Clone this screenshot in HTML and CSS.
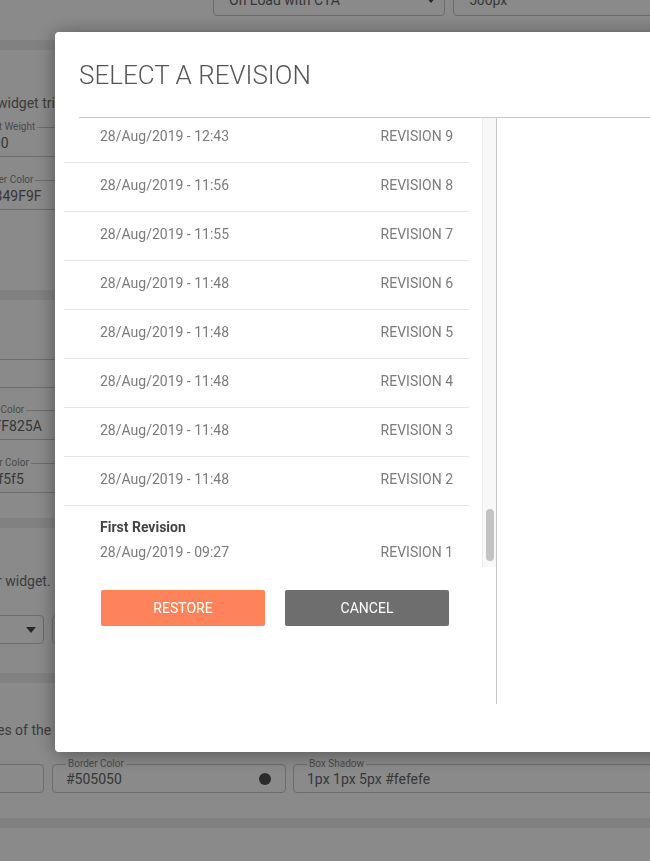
FILE: index.html
```html
<!DOCTYPE html>
<html lang="en">
<head>
<meta charset="utf-8">
<title>Select a revision</title>
<link rel="stylesheet" href="styles.css">
</head>
<body>
<div class="page">
  <div class="top-row">
    <div class="box top-select"><span>On Load with CTA</span><span class="caret"></span></div>
    <div class="box top-input"><span>500px</span></div>
  </div>
  <div class="band band-1"></div>

  <section class="sec sec-1">
    <p class="desc">widget triggers on the page.</p>
    <fieldset class="field f-weight"><legend>Font Weight</legend><span class="val">400</span></fieldset>
    <fieldset class="field f-hover"><legend>Hover Color</legend><span class="val">#349F9F</span></fieldset>
  </section>
  <div class="band"></div>

  <section class="sec sec-2">
    <div class="plain-input"></div>
    <fieldset class="field f-text"><legend>Text Color</legend><span class="val">#FF825A</span></fieldset>
    <fieldset class="field f-border"><legend>Border Color</legend><span class="val">#f5f5f5</span></fieldset>
  </section>
  <div class="band"></div>

  <section class="sec sec-3">
    <p class="desc">r widget.</p>
    <div class="field-row">
      <div class="box row-box sel-a"><span class="caret"></span></div>
      <div class="box row-box sel-b"></div>
    </div>
  </section>
  <div class="band"></div>

  <section class="sec sec-4">
    <p class="desc">es of the widget.</p>
    <div class="field-row">
      <fieldset class="field row-field"><legend>Border Width</legend><span class="val">1px</span></fieldset>
      <fieldset class="field row-field"><legend>Border Color</legend><span class="val">#505050</span><span class="swatch"></span></fieldset>
      <fieldset class="field row-field wide"><legend>Box Shadow</legend><span class="val">1px 1px 5px #fefefe</span></fieldset>
    </div>
  </section>
  <div class="band"></div>
</div>

<div class="overlay"></div>

<div class="modal">
  <h1 class="modal-title">SELECT A REVISION</h1>
  <div class="modal-rule"></div>
  <div class="modal-body">
    <div class="rev-col">
      <div class="rev-scroll">
        <div class="rev-viewport">
          <div class="rev-list">
            <div class="rev"><span>28/Aug/2019 - 12:43</span><span>REVISION 9</span></div>
            <div class="rev"><span>28/Aug/2019 - 11:56</span><span>REVISION 8</span></div>
            <div class="rev"><span>28/Aug/2019 - 11:55</span><span>REVISION 7</span></div>
            <div class="rev"><span>28/Aug/2019 - 11:48</span><span>REVISION 6</span></div>
            <div class="rev"><span>28/Aug/2019 - 11:48</span><span>REVISION 5</span></div>
            <div class="rev"><span>28/Aug/2019 - 11:48</span><span>REVISION 4</span></div>
            <div class="rev"><span>28/Aug/2019 - 11:48</span><span>REVISION 3</span></div>
            <div class="rev"><span>28/Aug/2019 - 11:48</span><span>REVISION 2</span></div>
            <div class="rev rev-first">
              <div class="rev-name">First Revision</div>
              <div class="rev-line"><span>28/Aug/2019 - 09:27</span><span>REVISION 1</span></div>
            </div>
          </div>
        </div>
        <div class="scroll-track"><div class="scroll-thumb"></div></div>
      </div>
      <div class="rev-actions">
        <button class="btn btn-restore">RESTORE</button>
        <button class="btn btn-cancel">CANCEL</button>
      </div>
    </div>
    <div class="preview-col"></div>
  </div>
</div>
</body>
</html>
```

FILE: styles.css
```css
* { box-sizing: border-box; }

html, body {
  margin: 0;
  height: 100%;
  overflow: hidden;
}

body {
  font-family: Roboto, "Liberation Sans", sans-serif;
  background: #ffffff;
  color: #666666;
}

/* ---------- background page ---------- */
.page {
  width: 650px;
}

.top-row {
  display: flex;
  gap: 8px;
  padding-left: 213px;
  height: 16px;
}

.box {
  border: 1px solid #c8c8c8;
  border-radius: 4px;
  display: flex;
  align-items: center;
  font-size: 14px;
  color: #666666;
  flex: none;
}

.top-select {
  width: 232px;
  height: 32px;
  margin-top: -16px;
  padding: 0 8px 0 15px;
  justify-content: space-between;
}

.top-input {
  width: 260px;
  height: 32px;
  margin-top: -16px;
  padding: 0 15px;
}

.caret {
  width: 0;
  height: 0;
  border-left: 5px solid transparent;
  border-right: 5px solid transparent;
  border-top: 6px solid #4a4a4a;
}

.band {
  height: 10px;
  background: #eeeeee;
}

.band-1 { margin-top: 24px; }

.sec { overflow: hidden; }

.sec-1 { height: 240px; padding-top: 43px; }
.sec-2 { height: 218px; padding-top: 59px; }
.sec-3 { height: 145px; padding-top: 43px; }
.sec-4 { height: 135px; padding-top: 37px; }

.desc {
  margin: 0 0 0 -3px;
  font-size: 14px;
  line-height: 20px;
  color: #707070;
  white-space: nowrap;
}

.field {
  margin: 0;
  padding: 0 14px 3px;
  border: 1px solid #c8c8c8;
  border-radius: 4px;
  min-width: 0;
  display: flex;
  align-items: center;
  justify-content: space-between;
}

.field legend {
  padding: 0 2px;
  font-size: 10px;
  line-height: 12px;
  color: #8a8a8a;
}

.field .val {
  font-size: 14px;
  line-height: 20px;
  color: #666666;
  white-space: nowrap;
}

.f-weight { width: 300px; margin-left: -35px; margin-top: 8px; }
.f-weight .val { margin-left: 5px; }

.f-hover { width: 300px; margin-left: -36px; margin-top: 17px; }
.f-hover .val { margin-left: 7px; }

.plain-input {
  width: 260px;
  height: 29px;
  margin-left: -200px;
  border: 1px solid #c8c8c8;
  border-radius: 4px;
}

.f-text { width: 300px; margin-left: -38px; margin-top: 16px; }
.f-text .val { margin-left: 8px; }

.f-border { width: 300px; margin-left: -44px; margin-top: 17px; }
.f-border .val { margin-left: 6px; }

.field-row {
  display: flex;
  gap: 8px;
  margin-left: -190px;
}

.sec-3 .field-row { margin-top: 24px; }
.sec-4 .field-row { margin-top: 18px; }

.row-box {
  width: 234px;
  height: 29px;
  justify-content: flex-end;
  padding-right: 7px;
}

.row-field {
  width: 234px;
  flex: none;
  padding: 0 15px 4px 13px;
}

.row-field .val { line-height: 18px; }

.row-field.wide { width: 420px; margin-left: -1px; }

.swatch {
  width: 12px;
  height: 12px;
  border-radius: 50%;
  background: #505050;
  margin-right: -1px;
}

/* ---------- overlay + modal ---------- */
.overlay {
  position: fixed;
  inset: 0;
  background: rgba(0, 0, 0, 0.46);
  z-index: 1;
}

.modal {
  position: fixed;
  left: 55px;
  top: 32px;
  width: 720px;
  height: 720px;
  background: #ffffff;
  border-radius: 4px;
  box-shadow: 0 2px 20px rgba(0, 0, 0, 0.4);
  z-index: 2;
}

.modal-title {
  margin: 0;
  padding: 27px 0 0 24px;
  font-size: 26px;
  line-height: 32px;
  font-weight: 300;
  color: #555555;
}

.modal-rule {
  margin: 26px 0 0 24px;
  height: 1px;
  background: #c8c8c8;
}

.modal-body {
  display: flex;
  margin-left: 9px;
}

.rev-col {
  width: 433px;
  height: 586px;
  border-right: 1px solid #c8c8c8;
  flex: none;
}

.rev-scroll {
  display: flex;
  gap: 13px;
  height: 449px;
}

.rev-viewport {
  width: 405px;
  overflow: hidden;
}

.rev-list {
  margin-top: -4px;
}

.rev {
  display: flex;
  justify-content: space-between;
  padding: 12px 16px 16px 36px;
  border-bottom: 1px solid #e4e4e4;
  font-size: 14px;
  line-height: 20px;
  color: #7b7b7b;
}

.rev-first {
  display: block;
  border-bottom: 0;
  padding-top: 11px;
  padding-bottom: 20px;
}

.rev-name {
  font-weight: 700;
  color: #444444;
}

.rev-line {
  display: flex;
  justify-content: space-between;
  margin-top: 5px;
}

.scroll-track {
  width: 14px;
  flex: none;
  background: #f8f8f8;
  border-left: 1px solid #ebebeb;
  padding: 391px 0 0 3px;
}

.scroll-thumb {
  width: 8px;
  height: 52px;
  border-radius: 4px;
  background: #c3c3c3;
}

.rev-actions {
  display: flex;
  gap: 20px;
  padding: 23px 0 0 37px;
}

.btn {
  width: 164px;
  height: 36px;
  border: 0;
  border-radius: 2px;
  font-family: Roboto, "Liberation Sans", sans-serif;
  font-size: 14px;
  color: #ffffff;
  padding: 0;
}

.btn-restore { background: #ff835a; }
.btn-cancel { background: #6e6e6e; }

.preview-col {
  flex: 1;
}
```
